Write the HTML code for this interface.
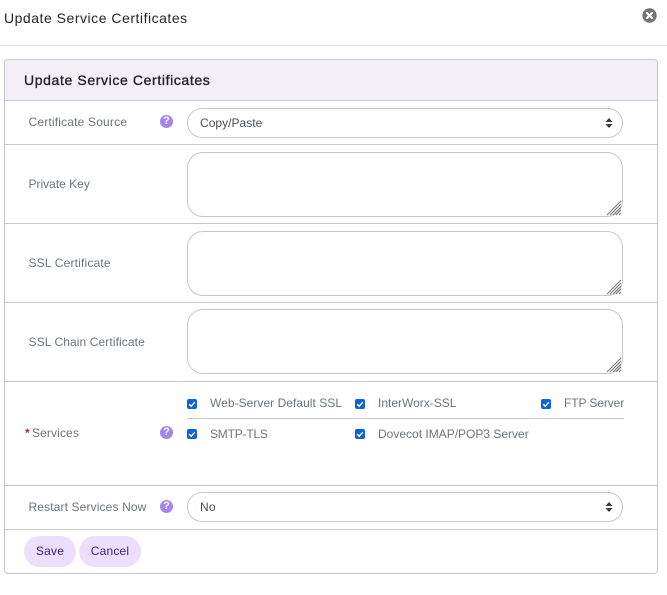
<!DOCTYPE html>
<html><head><meta charset="utf-8"><style>
html,body{margin:0;padding:0;background:#fff}
body{width:667px;height:595px;position:relative;overflow:hidden;font-family:"Liberation Sans",sans-serif}
.a{position:absolute}
.t{position:absolute;white-space:nowrap;font-size:12px;line-height:16px;color:#6c757d;letter-spacing:.15px}
.h{left:5px;width:652px;height:1px;background:#c9c6cc;position:absolute}
.in{position:absolute;left:187px;width:434px;border:1px solid #c4c8cc;background:#fff}
.sel{height:28px;border-radius:15px}
.ta{height:63px;border-radius:16px}
.q{position:absolute;left:160px;width:13px;height:13px;border-radius:50%;background:#a384f2;color:#fff;font:bold 11px/13px "Liberation Sans",sans-serif;text-align:center}
.c{position:absolute;width:10px;height:10px;border-radius:2px;background:#0d63d8}
.c svg{position:absolute;left:0;top:0}
.btn{position:absolute;top:536px;height:31px;border-radius:16px;background:#ecdffd;color:#3b1f7c;font-size:12px;line-height:31px;text-align:center;letter-spacing:.2px}
</style></head><body>
<div class="t" style="left:4px;top:9px;font-size:14px;line-height:18px;color:#212529;letter-spacing:.52px">Update Service Certificates</div>
<svg class="a" style="left:642px;top:8px" width="15" height="15" viewBox="0 0 15 15"><circle cx="7.5" cy="7.5" r="7.2" fill="#757575"/><path d="M5 5l5 5M10 5l-5 5" stroke="#fff" stroke-width="2" stroke-linecap="round"/></svg>
<div class="a" style="left:0;top:45px;width:667px;height:1px;background:#e2e2e2"></div>

<div class="a" style="left:4px;top:59px;width:652px;height:513px;border:1px solid #c9c6cc;border-radius:4px"></div>
<div class="a" style="left:5px;top:60px;width:652px;height:40px;background:#f4eff7;border-radius:3px 3px 0 0"></div>
<div class="t" style="left:24px;top:71px;font-size:14px;line-height:18px;color:#212529;letter-spacing:.62px;-webkit-text-stroke:.35px #212529">Update Service Certificates</div>
<div class="h" style="top:100px"></div>
<div class="h" style="top:144px"></div>
<div class="h" style="top:223px"></div>
<div class="h" style="top:302px"></div>
<div class="h" style="top:381px"></div>
<div class="h" style="top:485px"></div>
<div class="h" style="top:529px"></div>

<div class="t" style="left:28.5px;top:114px;letter-spacing:.18px">Certificate Source</div>
<div class="q" style="top:115px">?</div>
<div class="in sel" style="top:108px"></div>
<div class="t" style="left:200px;top:115px;color:#495057;letter-spacing:.03px">Copy/Paste</div>
<svg class="a" style="left:605px;top:118px" width="8" height="10" viewBox="0 0 8 10"><path d="M4 0L7.5 4H.5zM4 10L.5 6h7z" fill="#343a40"/></svg>

<div class="t" style="left:28.5px;top:176px;letter-spacing:0">Private Key</div>
<div class="in ta" style="top:152px"></div>
<div class="t" style="left:28.5px;top:255px;letter-spacing:.18px">SSL Certificate</div>
<div class="in ta" style="top:231px"></div>
<div class="t" style="left:28.5px;top:334px;letter-spacing:.1px">SSL Chain Certificate</div>
<div class="in ta" style="top:309px"></div>
<svg class="a" style="left:606px;top:200px" width="16" height="16" viewBox="0 0 16 16"><path d="M1 15L15 1M4 15L15 4M7 15l8-8M10 15l5-5M13 15l2-2" stroke="#777" stroke-width="1"/></svg>
<svg class="a" style="left:606px;top:279px" width="16" height="16" viewBox="0 0 16 16"><path d="M1 15L15 1M4 15L15 4M7 15l8-8M10 15l5-5M13 15l2-2" stroke="#777" stroke-width="1"/></svg>
<svg class="a" style="left:606px;top:357px" width="16" height="16" viewBox="0 0 16 16"><path d="M1 15L15 1M4 15L15 4M7 15l8-8M10 15l5-5M13 15l2-2" stroke="#777" stroke-width="1"/></svg>

<div class="t" style="left:25px;top:425px;color:#c0262d;font-weight:bold">*</div>
<div class="t" style="left:32px;top:425px;letter-spacing:.12px">Services</div>
<div class="q" style="top:426px">?</div>
<div class="a" style="left:187px;top:418px;width:437px;height:1px;background:#c9c6cc"></div>

<div class="c" style="left:187px;top:399px"><svg width="10" height="10" viewBox="0 0 10 10"><path d="M2.2 5.2l2 2 3.6-4" fill="none" stroke="#fff" stroke-width="1.4"/></svg></div>
<div class="t" style="left:210px;top:395px;letter-spacing:.04px">Web-Server Default SSL</div>
<div class="c" style="left:355px;top:399px"><svg width="10" height="10" viewBox="0 0 10 10"><path d="M2.2 5.2l2 2 3.6-4" fill="none" stroke="#fff" stroke-width="1.4"/></svg></div>
<div class="t" style="left:378px;top:395px;letter-spacing:0">InterWorx-SSL</div>
<div class="c" style="left:541px;top:399px"><svg width="10" height="10" viewBox="0 0 10 10"><path d="M2.2 5.2l2 2 3.6-4" fill="none" stroke="#fff" stroke-width="1.4"/></svg></div>
<div class="t" style="left:564px;top:395px;letter-spacing:-.1px">FTP Server</div>
<div class="c" style="left:187px;top:429px"><svg width="10" height="10" viewBox="0 0 10 10"><path d="M2.2 5.2l2 2 3.6-4" fill="none" stroke="#fff" stroke-width="1.4"/></svg></div>
<div class="t" style="left:210px;top:426px;letter-spacing:-.2px">SMTP-TLS</div>
<div class="c" style="left:355px;top:429px"><svg width="10" height="10" viewBox="0 0 10 10"><path d="M2.2 5.2l2 2 3.6-4" fill="none" stroke="#fff" stroke-width="1.4"/></svg></div>
<div class="t" style="left:378px;top:426px;letter-spacing:0">Dovecot IMAP/POP3 Server</div>

<div class="t" style="left:28.5px;top:499px;letter-spacing:.13px">Restart Services Now</div>
<div class="q" style="top:500px">?</div>
<div class="in sel" style="top:492px"></div>
<div class="t" style="left:200px;top:499px;color:#495057">No</div>
<svg class="a" style="left:605px;top:502px" width="8" height="10" viewBox="0 0 8 10"><path d="M4 0L7.5 4H.5zM4 10L.5 6h7z" fill="#343a40"/></svg>

<div class="btn" style="left:24px;width:52px">Save</div>
<div class="btn" style="left:79px;width:62px">Cancel</div>
</body></html>
